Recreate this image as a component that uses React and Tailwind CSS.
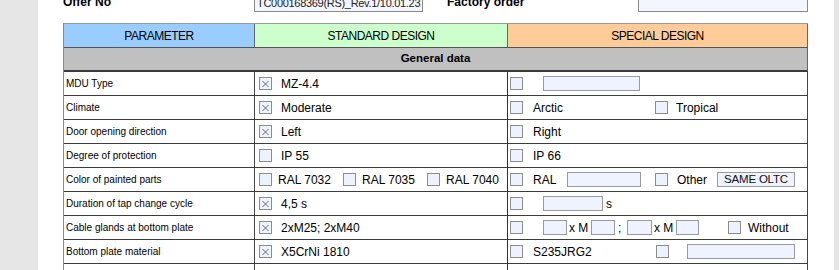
import React from 'react';

const Box = ({ checked, className = '' }) => (
  <span className={`relative inline-block w-[13px] h-[13px] shrink-0 border border-[#8c8c8c] bg-[#eef2fc] ${className}`}>
    {checked && (
      <svg className="absolute left-0 top-0" width="11" height="11" viewBox="0 0 11 11">
        <path d="M2.5 3L8.5 9M8.5 3L2.5 9" stroke="#6b6b6b" strokeWidth="1" />
      </svg>
    )}
  </span>
);

const Field = ({ className = '', children }) => (
  <span className={`inline-flex items-center justify-center h-[15px] shrink-0 border border-[#9a9a9a] bg-[#eef3ff] font-normal ${className}`}>
    {children}
  </span>
);

const Std = ({ checked, text }) => (
  <div className="flex items-center h-full pl-[4px]">
    <Box checked={checked} />
    <span className="ml-[9px]">{text}</span>
  </div>
);

const rows = [
  {
    label: 'MDU Type',
    std: <Std checked text="MZ-4.4" />,
    special: (
      <div className="flex items-center h-full pl-[2px]">
        <Box />
        <Field className="ml-[20px] w-[97px]" />
      </div>
    ),
  },
  {
    label: 'Climate',
    std: <Std checked text="Moderate" />,
    special: (
      <div className="flex items-center h-full pl-[2px]">
        <div className="flex items-center w-[145px]">
          <Box />
          <span className="ml-[10px]">Arctic</span>
        </div>
        <Box />
        <span className="ml-[8px]">Tropical</span>
      </div>
    ),
  },
  {
    label: 'Door opening direction',
    std: <Std checked text="Left" />,
    special: (
      <div className="flex items-center h-full pl-[2px]">
        <Box />
        <span className="ml-[10px]">Right</span>
      </div>
    ),
  },
  {
    label: 'Degree of protection',
    std: <Std text="IP 55" />,
    special: (
      <div className="flex items-center h-full pl-[2px]">
        <Box />
        <span className="ml-[10px]">IP 66</span>
      </div>
    ),
  },
  {
    label: 'Color of painted parts',
    std: (
      <div className="flex items-center h-full pl-[4px]">
        <div className="flex items-center w-[84px]">
          <Box />
          <span className="ml-[6px]">RAL 7032</span>
        </div>
        <div className="flex items-center w-[84px]">
          <Box />
          <span className="ml-[6px]">RAL 7035</span>
        </div>
        <div className="flex items-center">
          <Box />
          <span className="ml-[6px]">RAL 7040</span>
        </div>
      </div>
    ),
    special: (
      <div className="flex items-center h-full pl-[2px]">
        <div className="flex items-center w-[145px]">
          <Box />
          <span className="ml-[10px]">RAL</span>
          <Field className="ml-auto mr-[14px] w-[74px]" />
        </div>
        <Box />
        <span className="ml-[9px]">Other</span>
        <Field className="ml-auto mr-[12px] w-[78px] text-[11.5px] tracking-[-0.2px] text-[#111]">SAME OLTC</Field>
      </div>
    ),
  },
  {
    label: 'Duration of tap change cycle',
    std: <Std checked text="4,5 s" />,
    special: (
      <div className="flex items-center h-full pl-[2px]">
        <Box />
        <Field className="ml-[20px] w-[60px]" />
        <span className="ml-[3px]">s</span>
      </div>
    ),
  },
  {
    label: 'Cable glands at bottom plate',
    std: <Std checked text="2xM25; 2xM40" />,
    special: (
      <div className="flex items-center h-full pl-[2px]">
        <Box />
        <Field className="ml-[20px] w-[24px]" />
        <span className="w-[24px] pl-[2px]">x M</span>
        <Field className="w-[24px]" />
        <span className="w-[12px] pl-[3px]">;</span>
        <Field className="w-[25px]" />
        <span className="w-[24px] pl-[2px]">x M</span>
        <Field className="w-[23px]" />
        <Box className="ml-[29px]" />
        <span className="ml-[7px]">Without</span>
      </div>
    ),
  },
  {
    label: 'Bottom plate material',
    std: <Std checked text="X5CrNi 1810" />,
    special: (
      <div className="flex items-center h-full pl-[2px]">
        <div className="flex items-center w-[146px]">
          <Box />
          <span className="ml-[10px]">S235JRG2</span>
        </div>
        <Box />
        <Field className="ml-[18px] w-[108px]" />
      </div>
    ),
  },
  { label: '', std: null, special: null },
];

export default function App() {
  return (
    <div className="h-[270px] overflow-hidden bg-[#e6e6e6] font-['Liberation_Sans',Arial,sans-serif] text-black">
      <div className="ml-[38px] w-[796px] h-[270px] bg-white pl-[25px] overflow-hidden">
        <div className="flex items-center h-[20px] -mt-[8px] text-[12px]">
          <span className="w-[191px] font-bold">Offer No</span>
          <span className="flex items-center h-[20px] w-[169px] border border-[#8a8a8a] bg-[#f3f6ff] pl-[2px] pt-[2px] text-[11px] tracking-[-0.3px] text-[#222] whitespace-nowrap overflow-hidden">
            TC000168369(RS)_Rev.1/10.01.23
          </span>
          <span className="ml-[24px] w-[191px] font-bold">Factory order</span>
          <span className="h-[20px] w-[170px] border border-[#8a8a8a] bg-[#f3f6ff]" />
        </div>

        <div className="mt-[11px] w-[745px] border-l border-t border-l-[#8a8a8a] border-t-[#9a9a9a]">
          <div className="grid grid-cols-[191px_253px_300px] h-[24px] border-b border-[#555] text-[12px] tracking-[-0.5px]">
            <div className="flex items-center justify-center bg-[#99ccff] border-r border-[#666]">PARAMETER</div>
            <div className="flex items-center justify-center bg-[#ccffcc] border-r border-[#666]">STANDARD DESIGN</div>
            <div className="flex items-center justify-center bg-[#ffcc99] border-r border-[#666]">SPECIAL DESIGN</div>
          </div>
          <div className="flex items-center justify-center h-[24px] bg-[#c0c0c0] border-b-2 border-r border-b-[#3a3a3a] border-r-[#666] text-[11.5px] font-bold">
            General data
          </div>
          {rows.map((r, i) => (
            <div key={i} className="grid grid-cols-[191px_253px_300px] h-[24px] border-b border-[#3c3c3c] text-[12px]">
              <div className="flex items-center pl-[2px] border-r border-[#444] text-[10px]">{r.label}</div>
              <div className="border-r border-[#333]">{r.std}</div>
              <div className="border-r border-[#444]">{r.special}</div>
            </div>
          ))}
        </div>
      </div>
    </div>
  );
}
